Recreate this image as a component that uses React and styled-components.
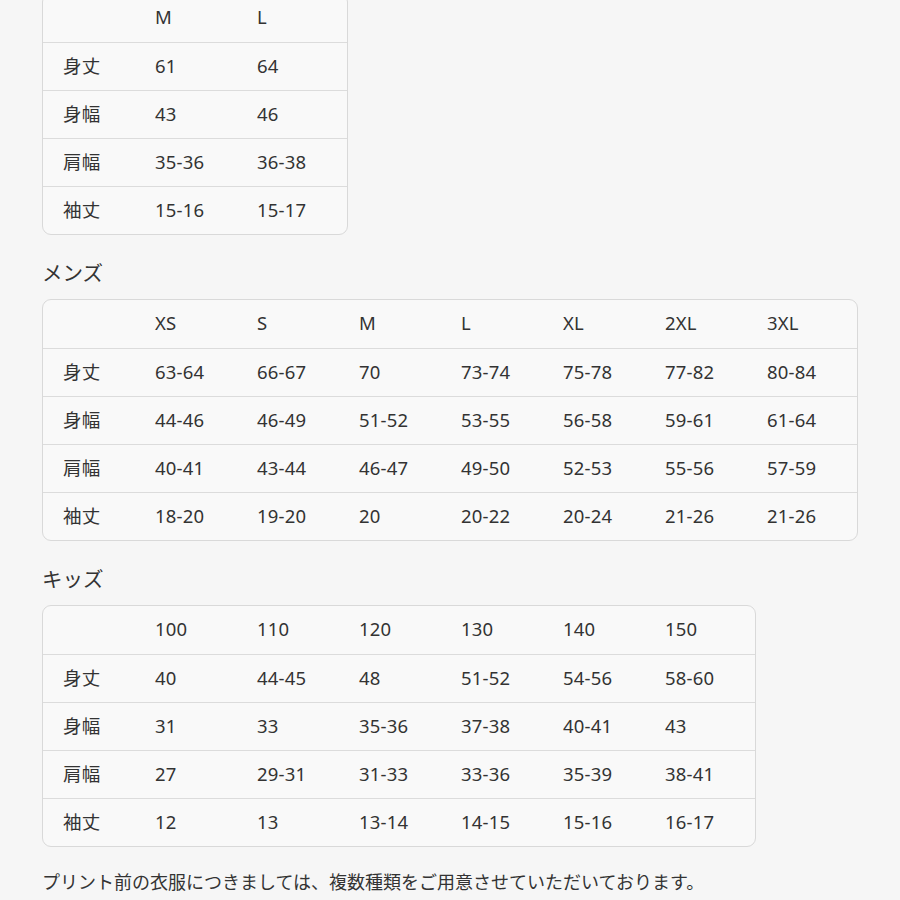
import React from 'react';
import styled, { createGlobalStyle } from 'styled-components';

const GlobalStyle = createGlobalStyle`
  html, body {
    margin: 0;
    padding: 0;
    background: #f6f6f6;
    overflow: hidden;
  }
  body {
    font-family: "Noto Sans", "Noto Sans CJK JP", sans-serif;
    color: #333;
  }
`;

const Page = styled.div`
  width: 900px;
  height: 900px;
  overflow: hidden;
  padding: 0 42px;
  box-sizing: border-box;
`;

const Inner = styled.div`
  margin-top: -7px;
`;

const Table = styled.div`
  display: inline-grid;
  grid-template-columns: 100px repeat(${(p) => p.cols}, 102px);
  border: 1px solid #d9d9d9;
  border-radius: 9px;
  background: #f9f9f9;
  overflow: hidden;
  vertical-align: top;
`;

const Cell = styled.div`
  height: 48px;
  box-sizing: border-box;
  display: flex;
  align-items: center;
  padding-left: ${(p) => (p.label ? '20px' : '12px')};
  padding-bottom: 3px;
  font-size: 18.5px;
  letter-spacing: 0.2px;
  color: #333;
  border-top: ${(p) => (p.first ? 'none' : '1.5px solid #dcdcdc')};
  font-family: "Noto Sans", "Noto Sans CJK JP", sans-serif;
`;

const Heading = styled.h2`
  margin: 23px 0 13px;
  height: 28px;
  line-height: 28px;
  font-size: 20.5px;
  font-weight: 400;
  color: #333;
  font-family: "Noto Sans CJK JP", sans-serif;
`;

const Note = styled.p`
  margin: 0;
  margin-top: 20px;
  font-size: 18px;
  line-height: 28px;
  color: #333;
  font-family: "Noto Sans CJK JP", sans-serif;
  white-space: nowrap;
`;

const Block = styled.div``;

const labels = ['身丈', '身幅', '肩幅', '袖丈'];

function SizeTable({ sizes, rows }) {
  return (
    <Table cols={sizes.length}>
      <Cell label first />
      {sizes.map((s) => (
        <Cell key={s} first>
          {s}
        </Cell>
      ))}
      {rows.map((row, i) => (
        <React.Fragment key={i}>
          <Cell label>{labels[i]}</Cell>
          {row.map((v, j) => (
            <Cell key={j}>{v}</Cell>
          ))}
        </React.Fragment>
      ))}
    </Table>
  );
}

const ladies = {
  sizes: ['M', 'L'],
  rows: [
    ['61', '64'],
    ['43', '46'],
    ['35-36', '36-38'],
    ['15-16', '15-17'],
  ],
};

const mens = {
  sizes: ['XS', 'S', 'M', 'L', 'XL', '2XL', '3XL'],
  rows: [
    ['63-64', '66-67', '70', '73-74', '75-78', '77-82', '80-84'],
    ['44-46', '46-49', '51-52', '53-55', '56-58', '59-61', '61-64'],
    ['40-41', '43-44', '46-47', '49-50', '52-53', '55-56', '57-59'],
    ['18-20', '19-20', '20', '20-22', '20-24', '21-26', '21-26'],
  ],
};

const kids = {
  sizes: ['100', '110', '120', '130', '140', '150'],
  rows: [
    ['40', '44-45', '48', '51-52', '54-56', '58-60'],
    ['31', '33', '35-36', '37-38', '40-41', '43'],
    ['27', '29-31', '31-33', '33-36', '35-39', '38-41'],
    ['12', '13', '13-14', '14-15', '15-16', '16-17'],
  ],
};

export default function App() {
  return (
    <Page>
      <GlobalStyle />
      <Inner>
        <Block>
          <SizeTable {...ladies} />
        </Block>
        <Heading>メンズ</Heading>
        <Block>
          <SizeTable {...mens} />
        </Block>
        <Heading>キッズ</Heading>
        <Block>
          <SizeTable {...kids} />
        </Block>
        <Note>
          プリント前の衣服につきましては、複数種類をご用意させていただいております。
          <br />
          ご注文の際に記載されているサイズをよくご確認のうえ、お選びいただきますようお願いいたします。
        </Note>
      </Inner>
    </Page>
  );
}
